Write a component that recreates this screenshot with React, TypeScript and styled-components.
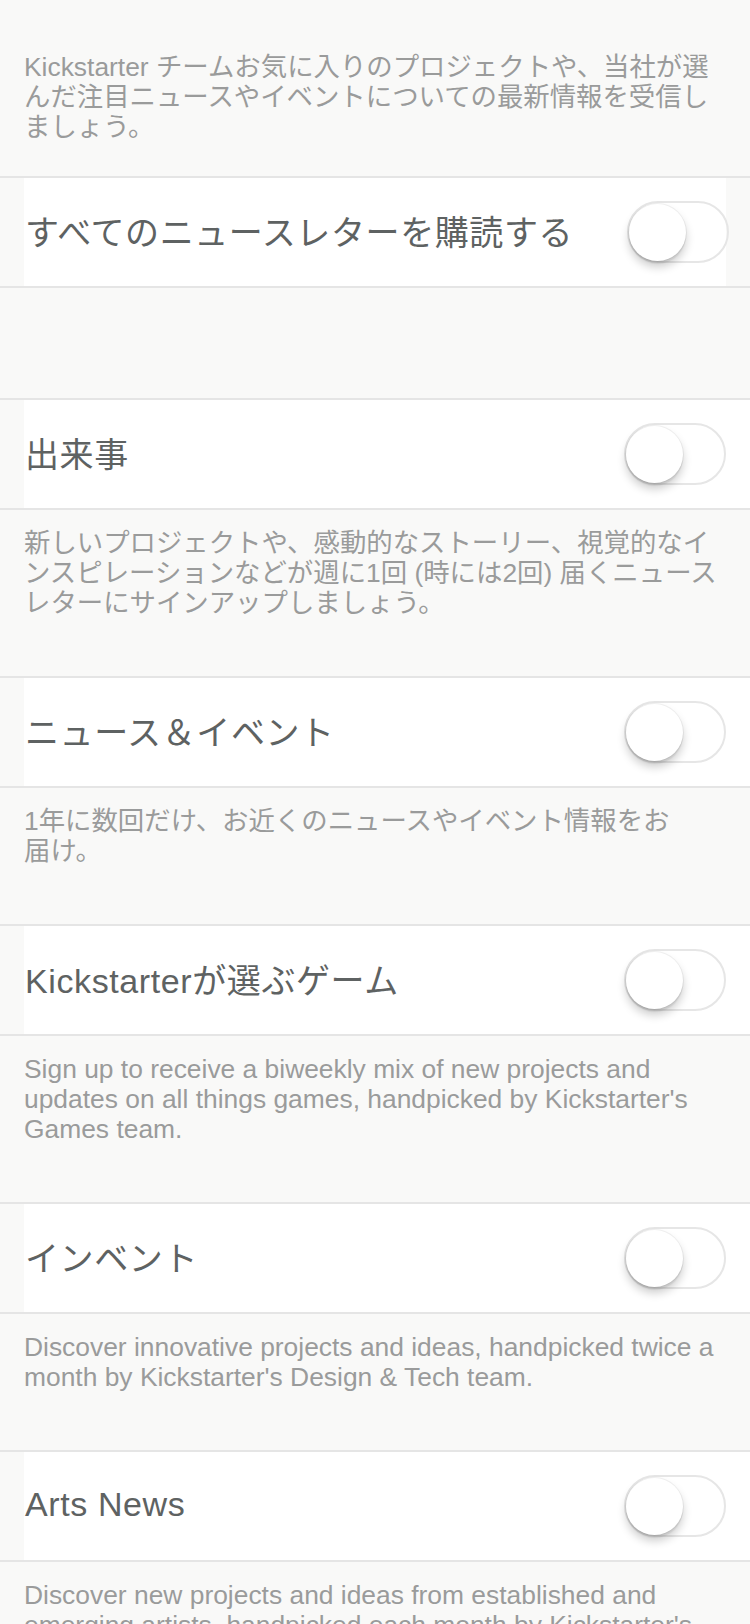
import React from "react";
import styled, { createGlobalStyle } from "styled-components";

const GlobalStyle = createGlobalStyle`
  html, body {
    margin: 0;
    padding: 0;
    background: #f9f9f8;
  }
  body {
    font-family: "Liberation Sans", "Noto Sans CJK JP", sans-serif;
    -webkit-font-smoothing: antialiased;
  }
`;

const Page = styled.div`
  width: 750px;
  background: #f9f9f8;
  display: flex;
  flex-direction: column;
`;

const Note = styled.div<{ $top: number; $bottom: number }>`
  padding: ${(p) => p.$top}px 24px ${(p) => p.$bottom}px 24px;
  font-size: 26.4px;
  line-height: 30px;
  color: #9a9b9b;
`;

const NoteLine = styled.div`
  white-space: nowrap;
`;

const Row = styled.div<{ $narrow?: boolean }>`
  border-top: 2px solid #e5e5e5;
  border-bottom: 2px solid #e5e5e5;
  padding-left: 24px;
  padding-right: ${(p) => (p.$narrow ? 24 : 0)}px;
  background: #f9f9f8;
`;

const RowInner = styled.div<{ $narrow?: boolean }>`
  height: 108px;
  background: #ffffff;
  display: flex;
  align-items: center;
  justify-content: space-between;
  padding-right: ${(p) => (p.$narrow ? 0 : 24)}px;
`;

const Title = styled.span`
  font-size: 34px;
  letter-spacing: 0.6px;
  color: #5e6262;
  padding-left: 1px;
  margin-top: -4px;
  white-space: nowrap;
`;

const Track = styled.span<{ $narrow?: boolean }>`
  box-sizing: border-box;
  width: 102px;
  height: 62px;
  border: 2px solid #e6e6e6;
  border-radius: 31px;
  display: flex;
  align-items: center;
  margin-right: ${(p) => (p.$narrow ? -3 : 0)}px;
  flex-shrink: 0;
`;

const Knob = styled.span`
  width: 57px;
  height: 57px;
  border-radius: 50%;
  background: #ffffff;
  box-shadow: 0 0 0 1px rgba(0, 0, 0, 0.05), 0 3px 1px rgba(0, 0, 0, 0.06),
    0 6px 10px rgba(0, 0, 0, 0.2);
`;

const Spacer = styled.div`
  height: 110px;
`;

const Toggle: React.FC<{ narrow?: boolean }> = ({ narrow }) => (
  <Track $narrow={narrow} role="switch" aria-checked={false}>
    <Knob />
  </Track>
);

type Section = { title: string; lines: string[] };

const sections: Section[] = [
  {
    title: "出来事",
    lines: [
      "新しいプロジェクトや、感動的なストーリー、視覚的なイ",
      "ンスピレーションなどが週に1回 (時には2回) 届くニュース",
      "レターにサインアップしましょう。",
    ],
  },
  {
    title: "ニュース＆イベント",
    lines: ["1年に数回だけ、お近くのニュースやイベント情報をお", "届け。"],
  },
  {
    title: "Kickstarterが選ぶゲーム",
    lines: [
      "Sign up to receive a biweekly mix of new projects and",
      "updates on all things games, handpicked by Kickstarter's",
      "Games team.",
    ],
  },
  {
    title: "インベント",
    lines: [
      "Discover innovative projects and ideas, handpicked twice a",
      "month by Kickstarter's Design & Tech team.",
    ],
  },
  {
    title: "Arts News",
    lines: [
      "Discover new projects and ideas from established and",
      "emerging artists, handpicked each month by Kickstarter's",
      "Arts team.",
    ],
  },
];

export default function App() {
  return (
    <Page>
      <GlobalStyle />
      <Note $top={52} $bottom={34}>
        <NoteLine>Kickstarter チームお気に入りのプロジェクトや、当社が選</NoteLine>
        <NoteLine>んだ注目ニュースやイベントについての最新情報を受信し</NoteLine>
        <NoteLine>ましょう。</NoteLine>
      </Note>
      <Row $narrow>
        <RowInner $narrow>
          <Title>すべてのニュースレターを購読する</Title>
          <Toggle narrow />
        </RowInner>
      </Row>
      <Spacer />
      {sections.map((s) => (
        <React.Fragment key={s.title}>
          <Row>
            <RowInner>
              <Title>{s.title}</Title>
              <Toggle />
            </RowInner>
          </Row>
          <Note $top={18} $bottom={58}>
            {s.lines.map((l) => (
              <NoteLine key={l}>{l}</NoteLine>
            ))}
          </Note>
        </React.Fragment>
      ))}
    </Page>
  );
}
